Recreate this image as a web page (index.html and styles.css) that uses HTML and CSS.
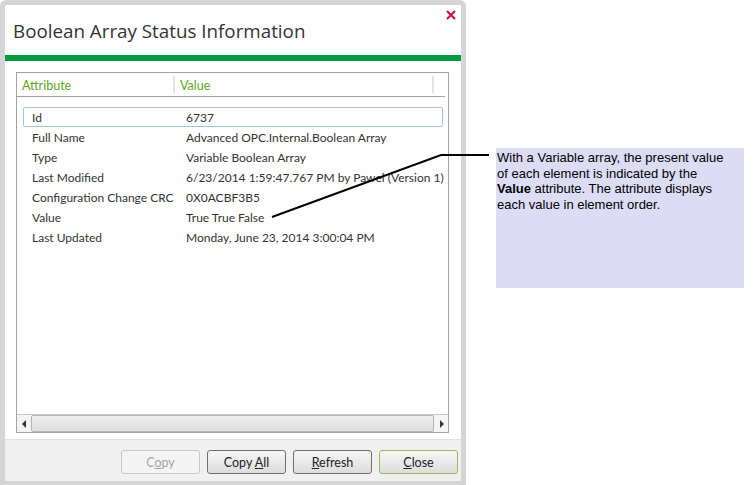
FILE: index.html
```html
<!DOCTYPE html>
<html>

<head>
    <title>Boolean Array Status Information</title>
    <link rel="stylesheet" href="styles.css">
</head>

<body>

    <div class="page">
        <div class="dialog">
            <div class="dialog-header">
                <h1>Boolean Array Status Information</h1>
                <svg class="close-x" width="10" height="10" viewBox="0 0 10 10">
                    <path d="M1 1 L9 9 M9 1 L1 9" stroke="#cc1452" stroke-width="2.2" fill="none"/>
                </svg>
            </div>
            <div class="green-bar"></div>
            <div class="dialog-body">
                <div class="list">
                    <div class="list-head">
                        <div class="col-attr">Attribute</div>
                        <div class="col-value">Value</div>
                        <div class="col-rest"></div>
                    </div>
                    <div class="rows">
                        <div class="row selected"><span class="attr">Id</span><span class="val">6737</span></div>
                        <div class="row"><span class="attr">Full Name</span><span class="val">Advanced OPC.Internal.Boolean Array</span></div>
                        <div class="row"><span class="attr">Type</span><span class="val">Variable Boolean Array</span></div>
                        <div class="row"><span class="attr">Last Modified</span><span class="val">6/23/2014 1:59:47.767 PM by Pawel (Version 1)</span></div>
                        <div class="row"><span class="attr">Configuration Change CRC</span><span class="val">0X0ACBF3B5</span></div>
                        <div class="row"><span class="attr">Value</span><span class="val">True True False</span></div>
                        <div class="row"><span class="attr">Last Updated</span><span class="val">Monday, June 23, 2014 3:00:04 PM</span></div>
                    </div>
                    <div class="hscroll">
                        <div class="arrow-btn"><span class="tri-left"></span></div>
                        <div class="thumb"></div>
                        <div class="arrow-btn"><span class="tri-right"></span></div>
                    </div>
                </div>
            </div>
            <div class="dialog-footer">
                <button class="btn" disabled>C<u>o</u>py</button>
                <button class="btn">Copy <u>A</u>ll</button>
                <button class="btn"><u>R</u>efresh</button>
                <button class="btn btn-default"><u>C</u>lose</button>
            </div>
        </div>

        <div class="note">
            With a Variable array, the present value of each element is indicated by the
            <b>Value</b> attribute. The attribute displays each value in element order.
        </div>

        <svg class="leader" width="754" height="485">
            <polyline points="272,217 441,155 489,155" fill="none" stroke="#000" stroke-width="2"/>
        </svg>
    </div>

</body>
</html>
```

FILE: styles.css
```css
body {
    margin: 0;
    background: #fff;
    font-family: Lato, "Open Sans", sans-serif;
    color: #333;
}
.page {
    position: relative;
    display: flex;
    align-items: flex-start;
    width: 754px;
    height: 485px;
}
.dialog {
    width: 466px;
    height: 485px;
    box-sizing: border-box;
    border: 5px solid #d5d5d5;
    border-bottom-width: 4px;
    border-radius: 6px 6px 0 0;
    background: #fff;
    display: flex;
    flex-direction: column;
}
.dialog-header {
    height: 50px;
    display: flex;
    justify-content: space-between;
    align-items: flex-start;
}
h1 {
    margin: 13px 0 0 8px;
    font-family: "Open Sans", sans-serif;
    font-size: 18.8px;
    font-weight: normal;
    color: #333;
}
.close-x {
    margin: 5px 5px 0 0;
}
.green-bar {
    height: 6px;
    background: #009a40;
}
.dialog-body {
    flex: 1;
    padding: 11px 12px 4px 11px;
    border-bottom: 1px solid #e3e3e3;
}
.list {
    height: 361px;
    box-sizing: border-box;
    border: 1px solid #a3a3a3;
    display: flex;
    flex-direction: column;
}
.list-head {
    height: 23px;
    border-bottom: 1px solid #a3a3a3;
    display: flex;
    font-size: 12.5px;
    color: #5ea617;
    margin: 0 3px 0 0;
}
.list-head div {
    padding: 2px 0 0 5px;
    margin: 3px 0;
}
.col-attr {
    width: 151px;
    border-right: 2px solid #e4e4e4;
}
.col-value {
    width: 252px;
    border-right: 2px solid #e4e4e4;
}
.rows {
    flex: 1;
    padding: 10px 0 0 6px;
    font-size: 12px;
}
.row {
    width: 420px;
    height: 20px;
    box-sizing: border-box;
    display: flex;
    align-items: center;
    padding-left: 8px;
    border: 1px solid transparent;
}
.row.selected {
    border-color: #9ec3ee;
    border-radius: 2px;
}
.attr {
    width: 154px;
    flex-shrink: 0;
}
.val {
    white-space: nowrap;
}
.hscroll {
    height: 17px;
    border-top: 1px solid #c9c9c9;
    display: flex;
    background: #f0f0f0;
}
.arrow-btn {
    width: 13px;
    display: flex;
    align-items: center;
    justify-content: center;
    background: #f4f4f4;
}
.tri-left {
    border-top: 4px solid transparent;
    border-bottom: 4px solid transparent;
    border-right: 4px solid #333;
}
.tri-right {
    border-top: 4px solid transparent;
    border-bottom: 4px solid transparent;
    border-left: 4px solid #333;
}
.thumb {
    flex: 1;
    margin: 0 1px;
    border: 1px solid #b5b5b5;
    border-radius: 2px;
    background: linear-gradient(#ededed, #dedede);
}
.dialog-footer {
    height: 41px;
    background: #f0f0f0;
    display: flex;
    justify-content: flex-end;
    align-items: flex-start;
    gap: 7px;
    padding: 10px 3px 0 0;
    box-sizing: border-box;
}
.btn {
    width: 79px;
    height: 24px;
    font-family: Lato, "Open Sans", sans-serif;
    font-size: 12.5px;
    color: #222;
    border: 1px solid #707070;
    border-radius: 3px;
    background: linear-gradient(#f6f6f6, #dddddd);
    padding: 0;
}
.btn:disabled {
    color: #a5a5a5;
    border-color: #c8c8c8;
    background: #f4f4f4;
}
.btn-default {
    border-color: #8dc055;
}
.note {
    margin: 148px 0 0 30px;
    width: 248px;
    height: 140px;
    box-sizing: border-box;
    padding: 2px 12px 0 1px;
    background: #dcdcf6;
    font-family: "Liberation Sans", Arial, sans-serif;
    font-size: 13px;
    line-height: 15.7px;
    color: #000;
}
.leader {
    position: absolute;
    left: 0;
    top: 0;
    pointer-events: none;
}
```
